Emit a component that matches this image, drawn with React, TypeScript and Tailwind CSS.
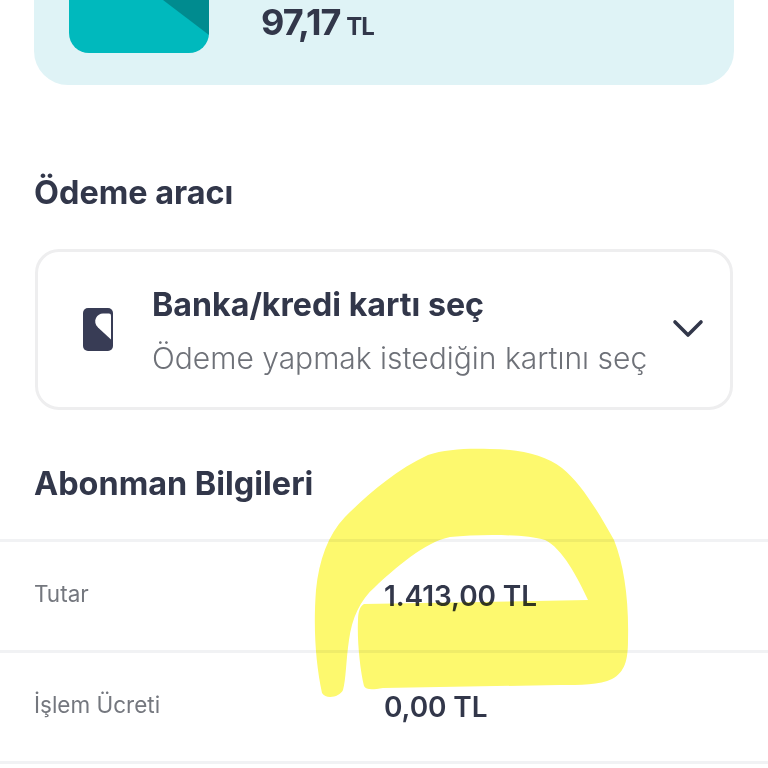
const font = "font-['Inter','Noto_Sans',sans-serif]";

function CardIcon() {
  return (
    <svg width="30" height="43" viewBox="0 0 30 43" className="shrink-0">
      <rect width="30" height="43" rx="5" fill="#383c55" />
      <path d="M26 5.5a2 2 0 0 1 2 2V31.5L15 19.5C12 16.5 11.5 13 13 10C14.5 7 17 5.5 20 5.5z" fill="#fff" />
    </svg>
  );
}

function Row({ label, value }: { label: string; value: string }) {
  return (
    <div className="flex h-[111px] items-center border-b-[3px] border-[#f1f2f4] pl-[34px]">
      <span className="mb-[5px] w-[350px] text-[22.5px] text-[#74777e]">{label}</span>
      <span className="text-[28px] font-semibold tracking-[-0.1px] text-[#32374a]">{value}</span>
    </div>
  );
}

export default function App() {
  return (
    <div className={`relative h-[768px] w-[768px] overflow-hidden bg-white ${font}`}>
      {/* ── Top card ── */}
      <div className="ml-[34px] mr-[34px] flex h-[85px] rounded-b-[34px] bg-[#dff3f6] pl-[35px]">
        <div className="relative h-[53px] w-[140px] overflow-hidden rounded-b-[20px] bg-[#00b9bd]">
          <svg width="140" height="53" viewBox="0 0 140 53" className="absolute inset-0">
            <path d="M94 0L140 35V0z" fill="#008b8f" />
          </svg>
        </div>
        <div className="ml-[52px] flex items-baseline pt-[2px] text-[#32374a]">
          <span className="text-[36px] leading-[40px] font-bold tracking-[-1px]">97,17</span>
          <span className="ml-[6px] text-[24px] leading-[40px] font-bold tracking-[-1px]">TL</span>
        </div>
      </div>

      {/* ── Payment method ── */}
      <h2 className="mt-[86px] pl-[34px] text-[32.4px] leading-[44px] font-bold text-[#32374a]">Ödeme aracı</h2>
      <div className="mx-[35px] mt-[34px] flex h-[161px] items-center rounded-[24px] border-[3px] border-[#eeeeef] pr-[26px] pl-[45px]">
        <CardIcon />
        <div className="ml-[39px] flex-1">
          <div className="text-[32.2px] leading-[44px] font-bold text-[#32374a]">Banka/kredi kartı seç</div>
          <div className="mt-[11px] mb-[-1px] text-[30px] leading-[40px] font-light text-[#6e7178]">
            Ödeme yapmak istediğin kartını seç
          </div>
        </div>
        <svg width="32" height="20" viewBox="0 0 32 20" fill="none" stroke="#32374a" strokeWidth="3.6" strokeLinecap="round" strokeLinejoin="round" className="mb-[2px]">
          <path d="M3 3l13 13L29 3" />
        </svg>
      </div>

      {/* ── Subscriber info ── */}
      <h2 className="mt-[52px] pl-[34px] text-[32.4px] leading-[44px] font-bold text-[#32374a]">Abonman Bilgileri</h2>
      <div className="mt-[33px] border-t-[3px] border-[#f1f2f4]">
        <Row label="Tutar" value="1.413,00 TL" />
        <Row label="İşlem Ücreti" value="0,00 TL" />
      </div>

      {/* ── Marker scribble over the page ── */}
      <svg width="768" height="768" viewBox="0 0 768 768" className="pointer-events-none absolute inset-0 mix-blend-multiply">
        <path
          fill="#fdf96e"
          d="M322 693C316 665 313 630 316 590C319 560 328 535 345 517C365 497 395 470 428 455C445 449 470 448 490 449C520 449 545 455 562 468C582 484 600 515 614 540C624 565 629 600 628 640C628 660 625 672 612 679C600 685 580 685 560 685L383 688C372 690 366 690 364 686C360 670 357 640 358 620C358 612 360 606 364 604L588 600C578 578 562 548 545 540C525 534 480 534 450 537C425 542 395 568 375 587C360 600 352 618 349 640C346 660 346 680 343 690C340 697 326 700 322 693z"
        />
      </svg>
    </div>
  );
}
